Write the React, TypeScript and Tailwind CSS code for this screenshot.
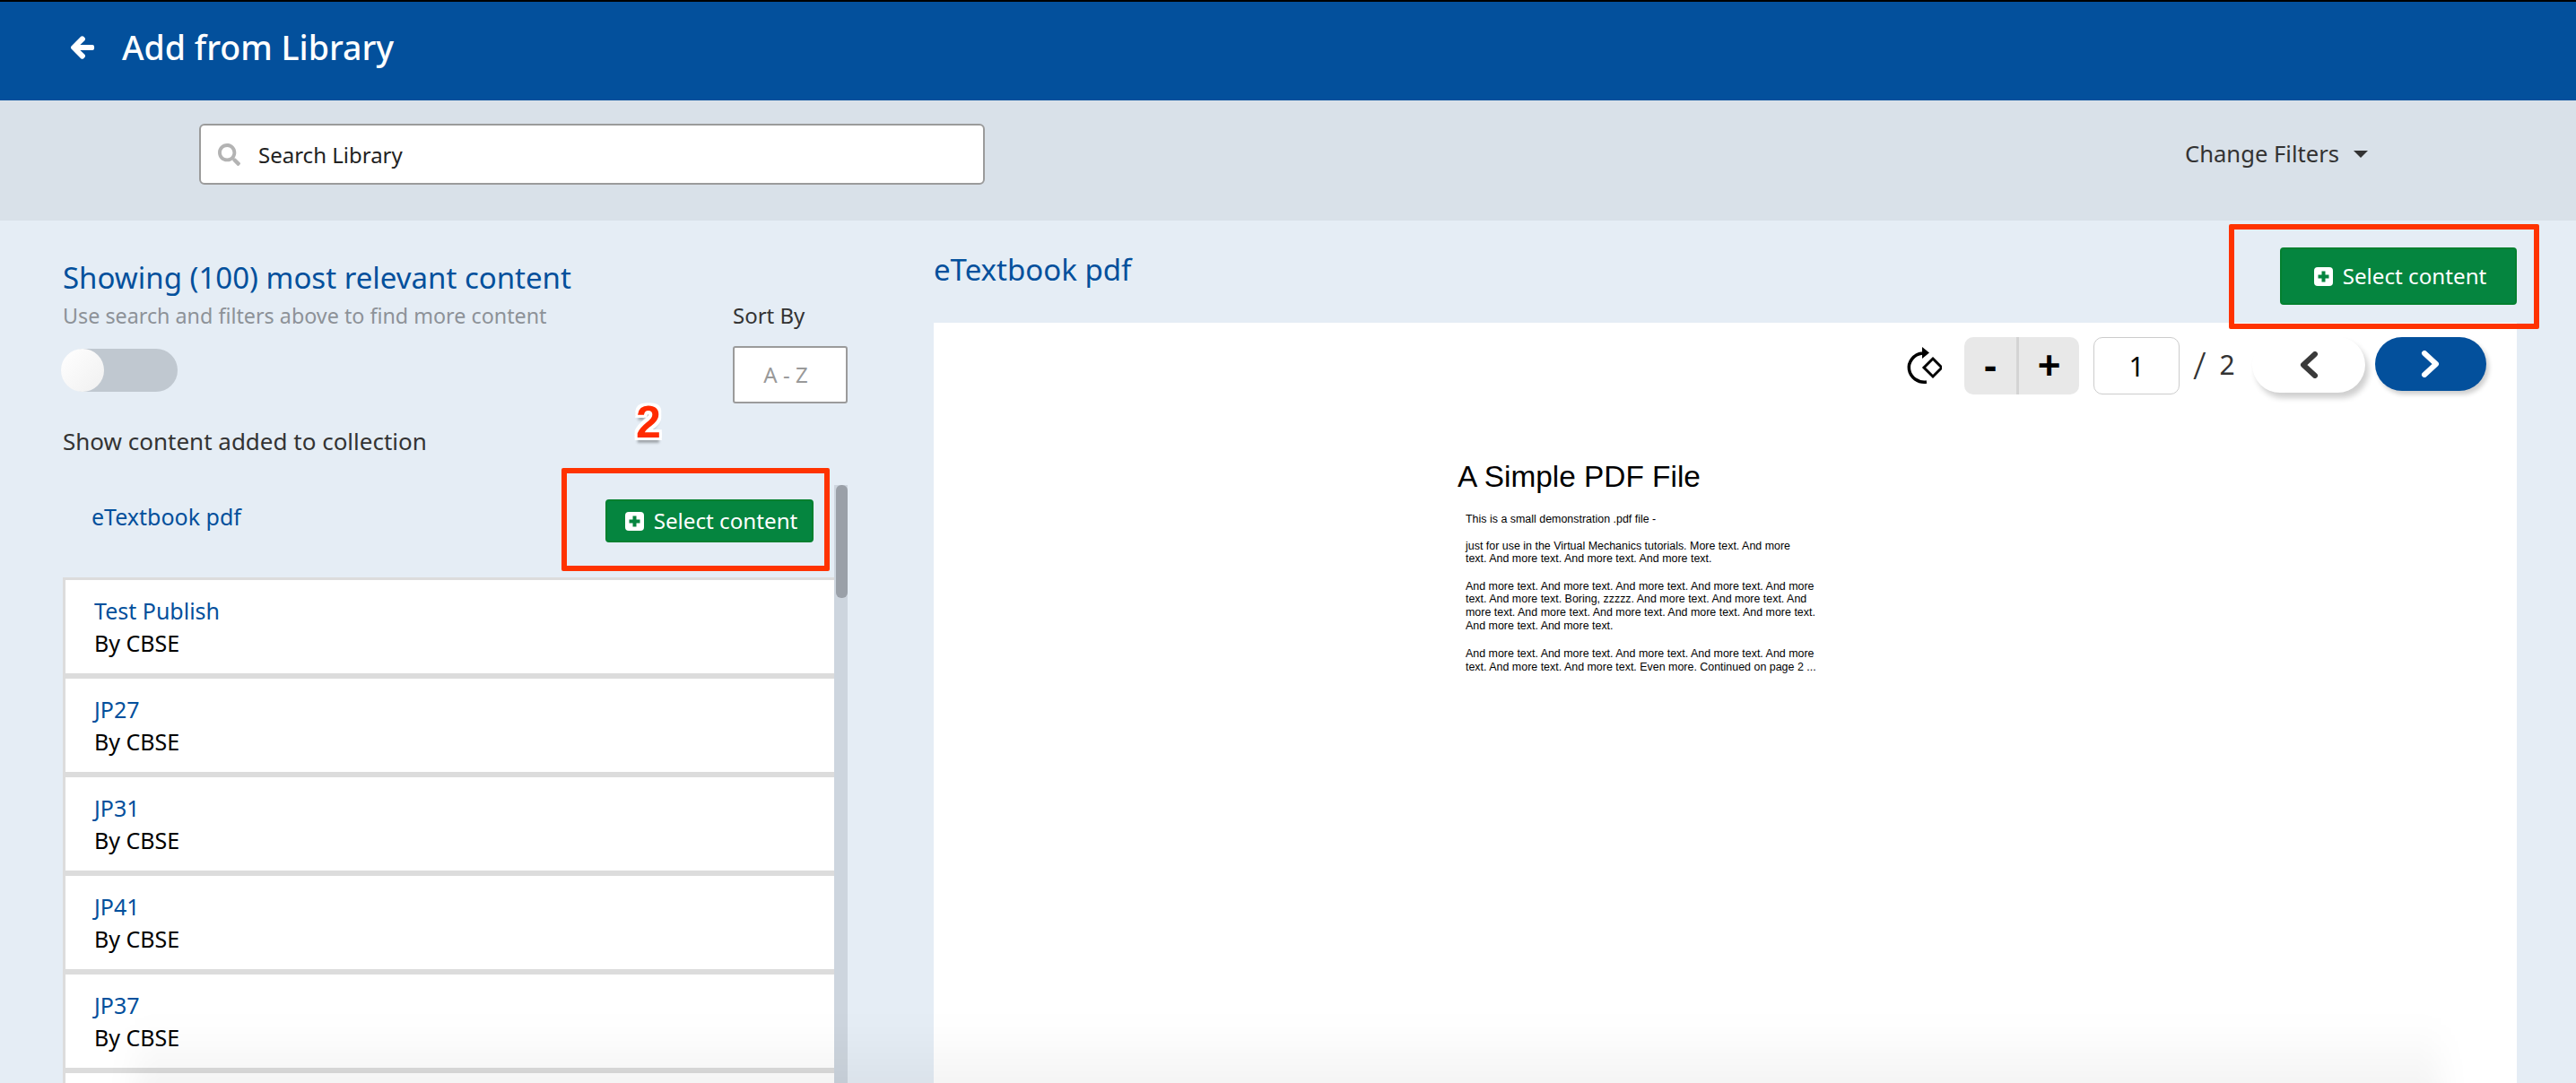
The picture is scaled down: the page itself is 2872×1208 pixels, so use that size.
import React from "react";
import { FaArrowLeft, FaSearch } from "react-icons/fa";

const items = ["Test Publish", "JP27", "JP31", "JP41", "JP37"];

function PlusBox() {
  return (
    <svg width="21" height="21" viewBox="0 0 21 21" className="shrink-0">
      <rect x="0" y="0" width="21" height="21" rx="4" fill="#ffffff" />
      <path d="M8.5 4.5h4v4h4v4h-4v4h-4v-4h-4v-4h4z" fill="#05853f" />
    </svg>
  );
}

function SelectButton({ className }: { className: string }) {
  return (
    <button className={`flex items-center justify-center gap-[11px] rounded-[4px] border-2 border-[#03802f] bg-[#05853f] pl-[4px] text-[24.2px] text-white ${className}`}>
      <PlusBox />
      <span className="leading-none">Select content</span>
    </button>
  );
}

export default function App() {
  return (
    <div className="relative flex h-[1208px] w-[2872px] flex-col overflow-hidden bg-[#e5edf5] font-['Noto_Sans','Open_Sans',sans-serif]">
      <header className="flex h-[112px] shrink-0 items-center gap-[30px] border-t-2 border-black bg-[#03509c] pb-[8px] pl-[78px] text-white">
        <FaArrowLeft className="h-[28px] w-[28px] stroke-white stroke-[30px]" />
        <h1 className="text-[37.5px] font-medium leading-none">Add from Library</h1>
      </header>

      <div className="flex h-[134px] shrink-0 items-start justify-between bg-[#d9e1e9] pl-[222px] pr-[232px]">
        <div className="mt-[26px] flex h-[68px] w-[876px] items-center gap-[20px] rounded-[6px] border-2 border-[#9b9b9b] bg-white pl-[19px]">
          <FaSearch className="h-[25px] w-[25px] text-[#b3b3b3]" />
          <span className="mt-[2px] text-[24px] text-[#222222]">Search Library</span>
        </div>
        <div className="mt-[41px] flex items-center gap-[16px] text-[25.6px] text-[#333333]">
          <span>Change Filters</span>
          <span className="h-0 w-0 border-x-[8px] border-t-[8px] border-x-transparent border-t-[#333333]" />
        </div>
      </div>

      <main className="flex min-h-0 flex-1">
        <section className="flex w-[1041px] shrink-0 flex-col pl-[70px]">
          <div className="flex h-[295px] shrink-0 flex-col">
            <div className="flex items-start">
              <div className="w-[747px]">
                <h2 className="mt-[41px] text-[33px] leading-[46px] text-[#03509c]">Showing (100) most relevant content</h2>
                <p className="mt-[2px] text-[23.3px] leading-[34px] text-[#8d9298]">Use search and filters above to find more content</p>
                <div className="relative mt-[20px] h-[48px] w-[128px] rounded-[24px] bg-[#c0c8d0]">
                  <div className="h-[48px] w-[48px] -translate-x-[2px] rounded-full bg-gradient-to-br from-white to-[#f0f0f0]" />
                </div>
              </div>
              <div className="w-[128px]">
                <div className="mt-[89px] text-[24px] leading-[34px] text-[#333333]">Sort By</div>
                <div className="mt-[17px] flex h-[64px] w-[128px] items-center justify-center rounded-[3px] border-2 border-[#9b9b9b] bg-white pr-[10px] text-[24px] text-[#999999]">A - Z</div>
              </div>
            </div>
            <p className="mt-[25px] text-[26px] leading-[34px] text-[#333333]">Show content added to collection</p>
          </div>

          <div className="relative flex min-h-0 w-[875px] flex-1">
            <div className="min-w-0 flex-1">
              <div className="flex h-[103px] items-start justify-between pl-[32px] pr-[23px]">
                <a className="mt-[17px] text-[25px] leading-[36px] text-[#03509c]">eTextbook pdf</a>
                <SelectButton className="mt-[16px] h-[48px] w-[232px]" />
              </div>
              <div className="flex flex-col gap-[6px] bg-[#dcdcdc] py-[3px] pl-[3px]">
                {items.map((t) => (
                  <div key={t} className="h-[104px] shrink-0 bg-white pl-[32px] pt-[16px] text-[25px] leading-[36px]">
                    <div className="text-[#03509c]">{t}</div>
                    <div className="text-black">By CBSE</div>
                  </div>
                ))}
                <div className="h-[104px] shrink-0 bg-white" />
              </div>
            </div>
            <div className="w-[15px] shrink-0 bg-[#cdd5de]">
              <div className="ml-[2px] h-[126px] w-[13px] rounded-[6px] bg-[#9aa0a8]" />
            </div>
            <div className="absolute left-[556px] top-[-19px] h-[115px] w-[299px] rounded-[2px] border-[6px] border-[#ff3300]" />
            <div className="absolute left-[639px] top-[-98px] font-['Liberation_Sans',sans-serif] text-[50px] font-bold leading-[56px] text-[#ff2a00] [text-shadow:3px_0_0_#fff,-3px_0_0_#fff,0_3px_0_#fff,0_-3px_0_#fff,3px_3px_0_#fff,-3px_3px_0_#fff,3px_-3px_0_#fff,-3px_-3px_0_#fff,0_6px_3px_#0000004d]">2</div>
          </div>
        </section>

        <section className="relative flex min-w-0 flex-1 flex-col pr-[66px]">
          <div className="flex h-[114px] shrink-0 items-start justify-between">
            <h2 className="mt-[32px] text-[33px] leading-[46px] text-[#03509c]">eTextbook pdf</h2>
            <SelectButton className="mt-[30px] h-[64px] w-[264px]" />
          </div>
          <div className="min-h-0 flex-1 bg-white">
            <div className="flex h-[80px] items-start justify-end pr-[34px] pt-[16px]">
              <svg width="44" height="44" viewBox="8 8 44 44" className="mr-[25px] mt-[9px] shrink-0" fill="none" stroke="#000000">
                <path d="M30 17 A17 16 0 0 0 35 49" strokeWidth="3.5" />
                <path d="M30 10 L38 16.5 L30 23 Z" fill="#000000" stroke="none" />
                <path d="M42 23 L52 33 L42 43 L32 33 Z" strokeWidth="3" />
              </svg>
              <div className="flex h-[64px] w-[128px] shrink-0 rounded-[10px] bg-[#e8e8e8] font-['Liberation_Sans',sans-serif] text-[44px] font-bold leading-[64px] text-black">
                <span className="flex w-[61px] justify-center border-r-[3px] border-[#d4d4d4]">-</span>
                <span className="flex flex-1 justify-center">+</span>
              </div>
              <div className="ml-[16px] flex h-[64px] w-[96px] shrink-0 items-center justify-center rounded-[10px] border border-[#cccccc] text-[30px] text-black">1</div>
              <span className="ml-[15px] mt-[7px] flex w-[66px] items-center gap-[15px] text-[#333333]">
                <span className="text-[42px] font-light leading-[48px]">/</span>
                <span className="text-[30px] leading-[48px]">2</span>
              </span>
              <button className="flex h-[62px] w-[126px] shrink-0 items-center justify-center rounded-[31px] bg-white shadow-[4px_6px_6px_#00000030]">
                <svg width="22" height="30" viewBox="0 0 22 30" fill="none" stroke="#3a3a3a" strokeWidth="6" strokeLinecap="round" strokeLinejoin="round"><path d="M18 3 L5 15 L18 27" /></svg>
              </button>
              <button className="ml-[11px] flex h-[60px] w-[124px] shrink-0 items-center justify-center rounded-[30px] bg-[#03509c] shadow-[3px_4px_5px_#00000030]">
                <svg width="22" height="30" viewBox="0 0 22 30" fill="none" stroke="#ffffff" strokeWidth="6" strokeLinecap="round" strokeLinejoin="round"><path d="M4 3 L17 15 L4 27" /></svg>
              </button>
            </div>
            <article className="ml-[584px] mt-[72px] w-[420px] font-['Liberation_Sans',sans-serif] text-[12.45px] leading-[14.6px] text-black">
              <h3 className="text-[33.4px] leading-[40px]">A Simple PDF File</h3>
              <div className="ml-[9px]">
                <p className="mt-[20px]">This is a small demonstration .pdf file -</p>
                <p className="mt-[15px]">just for use in the Virtual Mechanics tutorials. More text. And more<br />text. And more text. And more text. And more text.</p>
                <p className="mt-[16px]">And more text. And more text. And more text. And more text. And more<br />text. And more text. Boring, zzzzz. And more text. And more text. And<br />more text. And more text. And more text. And more text. And more text.<br />And more text. And more text.</p>
                <p className="mt-[17px]">And more text. And more text. And more text. And more text. And more<br />text. And more text. And more text. Even more. Continued on page 2 ...</p>
              </div>
            </article>
          </div>
          <div className="absolute left-[1444px] top-[4px] h-[117px] w-[346px] rounded-[2px] border-[6px] border-[#ff3300]" />
        </section>
      </main>

      <div className="pointer-events-none absolute bottom-[-50px] left-[150px] right-[150px] h-[120px] bg-gradient-to-t from-[#00000012] to-transparent blur-[16px]" />
    </div>
  );
}
